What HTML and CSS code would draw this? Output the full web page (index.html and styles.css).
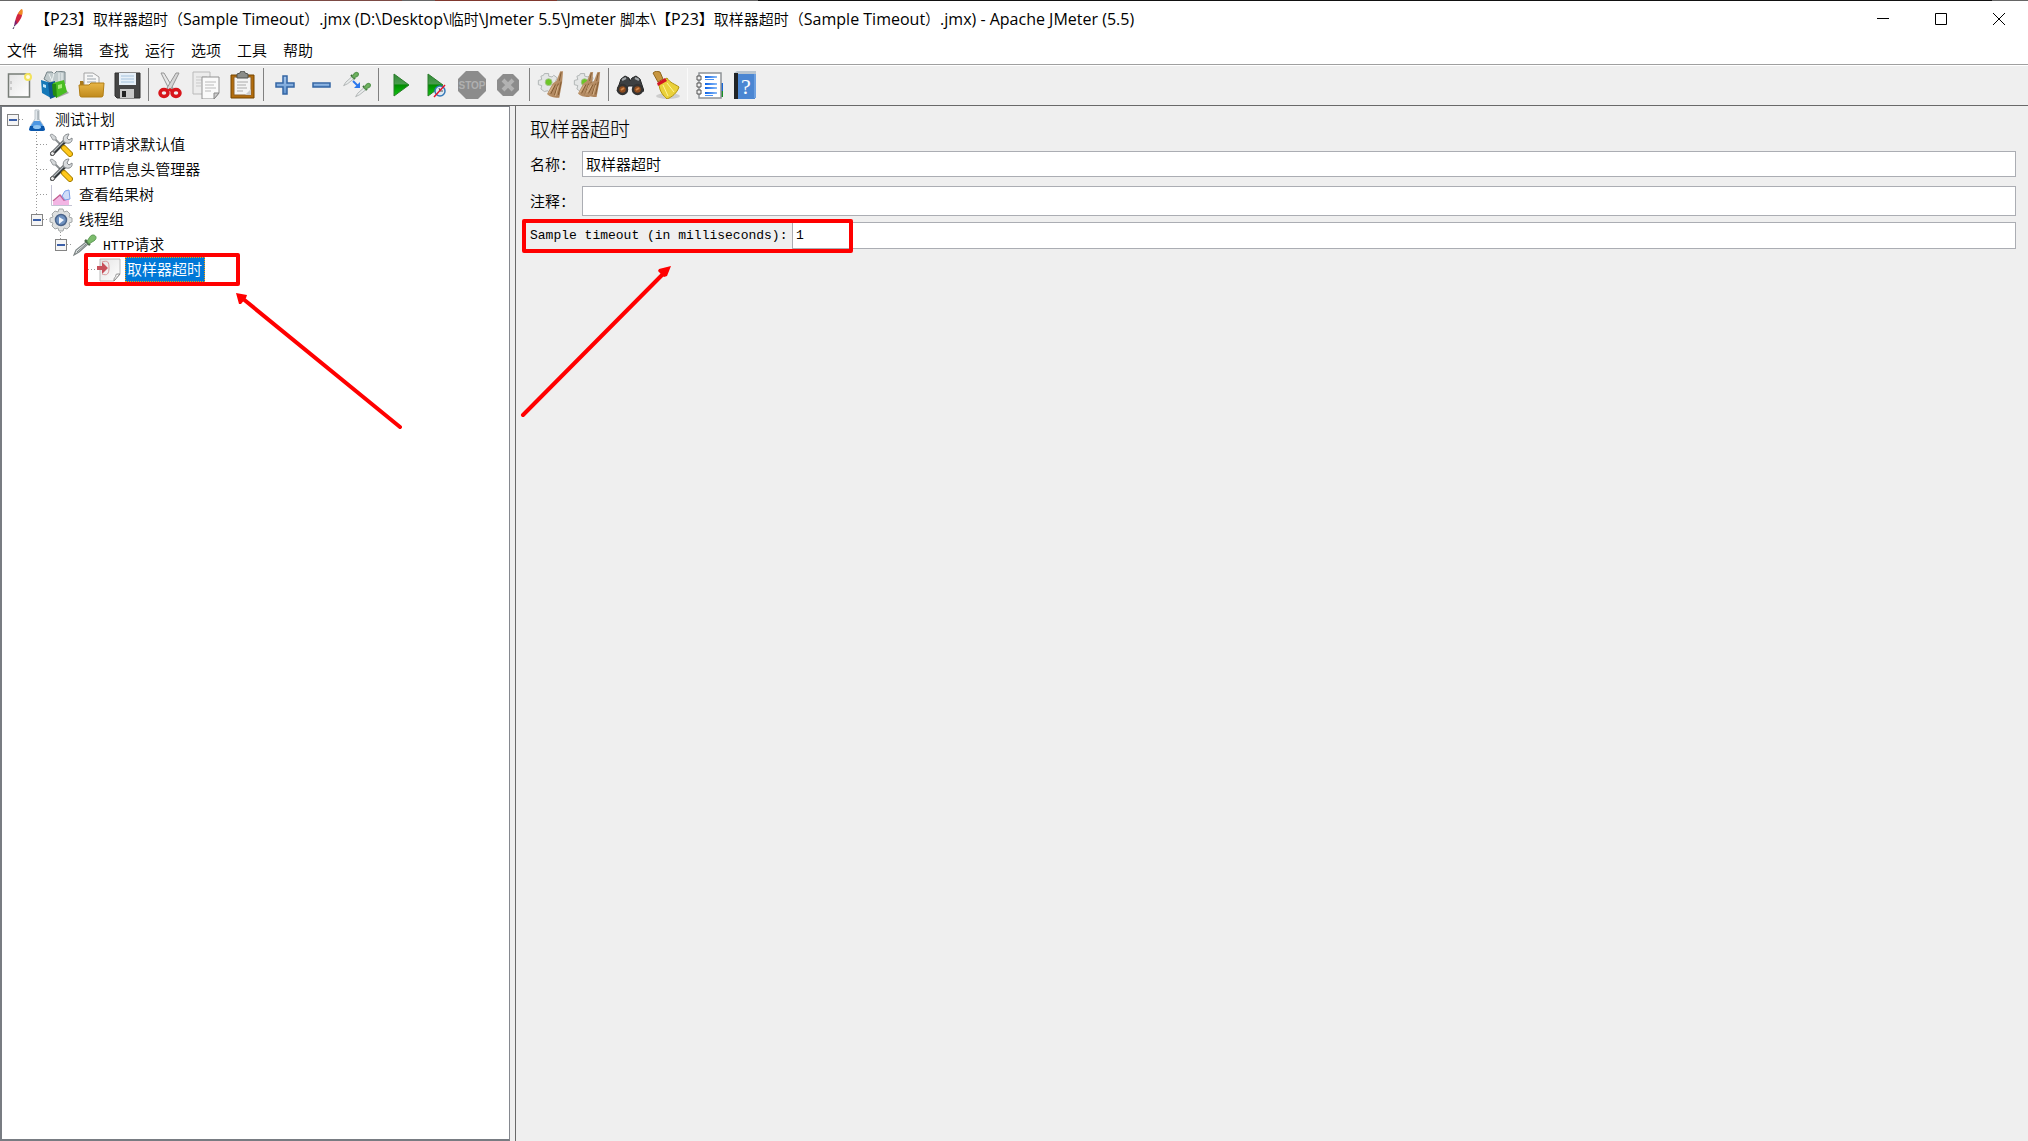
FILE: index.html
```html
<!DOCTYPE html>
<html lang="zh-CN">
<head>
<meta charset="utf-8">
<title>Apache JMeter (5.5)</title>
<link rel="stylesheet" href="styles.css">
</head>
<body>
<svg class="sprite" width="0" height="0" aria-hidden="true">
  <defs>
    <linearGradient id="blue" x1="0" y1="0" x2="0" y2="1"><stop offset="0" stop-color="#a9c8ec"/><stop offset="1" stop-color="#5f93cf"/></linearGradient>
    <linearGradient id="green" x1="0" y1="0" x2="0" y2="1"><stop offset="0" stop-color="#2f8a35"/><stop offset=".45" stop-color="#4a9c4e"/><stop offset=".5" stop-color="#008c00"/><stop offset="1" stop-color="#10c810"/></linearGradient>
    <linearGradient id="gold" x1="0" y1="0" x2="0" y2="1"><stop offset="0" stop-color="#e8b648"/><stop offset="1" stop-color="#c08a1c"/></linearGradient>
    <linearGradient id="paper" x1="0" y1="0" x2="1" y2="1"><stop offset="0" stop-color="#e4e4e4"/><stop offset="1" stop-color="#ffffff"/></linearGradient>
    <linearGradient id="straw" x1="0" y1="0" x2="1" y2="1"><stop offset="0" stop-color="#c9a47e"/><stop offset="1" stop-color="#a67a50"/></linearGradient>
    <linearGradient id="line" x1="0" x2="1"><stop offset="0" stop-color="#0a62e8"/><stop offset="1" stop-color="#8dbdf8"/></linearGradient>
    <symbol id="pipette" viewBox="0 0 24 24">
      <path d="M1 22 3 17 13 9l2 2-9 8z" fill="#e4e9e9" stroke="#7d8585" stroke-width="1.200"/>
      <path d="m4 19 9-8" stroke="#5a6262" stroke-width=".8"/>
      <path d="m12 7 5 5" stroke="#4c6c4c" stroke-width="2.500"/>
      <path d="M14 8c2-2 3-6 6-6 3 0 4 3 2 5-2 2-4 2-6 4z" fill="#7cbc6c" stroke="#5c9a54"/>
    </symbol>
    <symbol id="pipette-small" viewBox="0 0 24 24">
      <path d="M1 22 4 17 14 8l3 3-10 8z" fill="#e9ecec" stroke="#a4aaaa" stroke-width="1.200"/>
      <path d="m12 6 6 6" stroke="#3d6a38" stroke-width="3"/>
      <path d="M14 8c2-2 3-6 6-6 3 0 4 3 2 5-2 2-4 2-6 4z" fill="#6fb45e" stroke="#5c9a54" stroke-width="2"/>
    </symbol>
    <symbol id="tools" viewBox="0 0 24 24">
      <path d="m4 4 10 10" stroke="#8b8f92" stroke-width="2"/>
      <path d="M1 2 3 1l4 3 0 3-3 0z" fill="#d5d8da" stroke="#9a9ea1"/>
      <path d="m3 21 13-13" stroke="#33383b" stroke-width="4" stroke-linecap="round"/>
      <path d="m3 20 12-12" stroke="#b6bbbe" stroke-width="1.500"/>
      <path d="M15 9c-2-4 0-8 5-8l-2 4 2 2 3-2c1 4-3 7-8 4z" fill="#d8dbdd" stroke="#85898c"/>
      <circle cx="3.500" cy="20.500" r="2" fill="#e9e9e9" stroke="#555"/>
      <path d="m15 15 6 6" stroke="#a98000" stroke-width="6" stroke-linecap="round"/>
      <path d="m15 15 6 6" stroke="#ffc81c" stroke-width="4" stroke-linecap="round"/>
    </symbol>
    <symbol id="gearbit" viewBox="0 0 28 28">
      <path d="M8 3h5v3l4 1 2-2 4 3-2 4 3 1v6l-4 1-1 4-5 2-2-3-4 1-4-3 1-4-4-1v-5l4-1-1-4 3-1z" fill="#e4e6e6" stroke="#aaaeae"/>
      <circle cx="13" cy="13" r="4" fill="#6cc627" stroke="#a5bf8e"/>
    </symbol>
    <symbol id="straws" viewBox="0 0 18 28">
      <path d="m17 0-3 0-4 10-4 3-6 11c4 4 9 4 13 4l3-16z" fill="url(#straw)"/>
      <path d="m9 14-5 10m8-11-4 12m7-14-3 14m3-24-2 9" stroke="#80582f" fill="none"/>
      <path d="m7 15-5 8m10-8-3 11" stroke="#dcb98f" fill="none"/>
    </symbol>
  </defs>
</svg>

<div class="window">
  <header class="titlebar">
    <svg class="feather" width="16" height="24" viewBox="0 0 16 24" aria-hidden="true">
      <path d="M5 17C5 11 8 5 11 3c3 4 0 9-4 14z" fill="#cf2440"/><path d="M8 7c1-3 3-5 4-5 1 1 1 3 0 6z" fill="#f08a24"/><path d="M6 13c-2 2-1 3-2 6l3-2z" fill="#7b2270"/><path d="m3 22 2-4" stroke="#3b2a55" stroke-dasharray="2 1"/>
    </svg>
    <h1 class="title"><span class="han">【</span>P23<span class="han">】取样器超时（</span>Sample Timeout<span class="han">）</span>.jmx (D:\Desktop\<span class="han">临时</span>\Jmeter 5.5\Jmeter <span class="han">脚本</span>\<span class="han">【</span>P23<span class="han">】取样器超时（</span>Sample Timeout<span class="han">）</span>.jmx) - Apache JMeter (5.5)</h1>
    <div class="controls">
      <button type="button" aria-label="最小化"><svg width="12" height="12" viewBox="0 0 12 12"><path d="M0 5.500h12"/></svg></button>
      <button type="button" aria-label="最大化"><svg width="12" height="12" viewBox="0 0 12 12"><path d="M.5.5h11v11H.5z"/></svg></button>
      <button type="button" aria-label="关闭"><svg width="12" height="12" viewBox="0 0 12 12"><path d="m0 0 12 12M12 0 0 12"/></svg></button>
    </div>
  </header>

  <nav class="menubar">
    <button type="button">文件</button>
    <button type="button">编辑</button>
    <button type="button">查找</button>
    <button type="button">运行</button>
    <button type="button">选项</button>
    <button type="button">工具</button>
    <button type="button">帮助</button>
  </nav>

  <div class="toolbar" role="toolbar">
    <button type="button" aria-label="新建"><svg viewBox="0 0 28 28"><path d="M3.500 3h21v23h-21z" fill="url(#paper)" stroke="#777d77" stroke-width="1.500"/><path d="M6 10v3m0 3v3" stroke="#aaa"/><circle cx="23" cy="6" r="3" fill="#fffce0" stroke="#f3e35c" stroke-width="2"/></svg></button>
    <button type="button" aria-label="模板"><svg viewBox="0 0 28 28"><path d="m16 27 12-5-4-4z" fill="#a5a5a5"/><path d="M3 8 6 1l5 0 2 2 3-3 8 1 0 12-10 2z" fill="#bfc9cb" stroke="#778488"/><path d="m8 3 3 7m2-8-2 8m7-8v8m3-8v9" stroke="#eef3f3"/><path d="m0 9 10 3v15L1 22z" fill="#1478b8"/><path d="m7 12 7-2v16l-5 2z" fill="#0c5791"/><path d="m2 13 3 1v3l-3-1z" fill="#bfe6fa"/><path d="m12 12 11-3 3 12-11 6z" fill="#48bd22"/><path d="m11 13 4 0 1 14-4-3z" fill="#238a12"/><path d="m17 14 4-1v4l-4 1z" fill="#a7ed78"/></svg></button>
    <button type="button" aria-label="打开"><svg viewBox="0 0 28 28"><path d="M3 10h3l2 2h16v12H3z" fill="#a9791c"/><path d="M7 2h9l6 4v10H7z" fill="#f7f7f7" stroke="#a3a3a3"/><path d="M10 5h6m-6 3h9m-9 3h9" stroke="#9aa3aa"/><path d="M2 14h10l2-2h13l-1 13a2 2 0 0 1-2 1H5a2 2 0 0 1-2-1z" fill="url(#gold)" stroke="#b27f16"/></svg></button>
    <button type="button" aria-label="保存"><svg viewBox="0 0 28 28"><path d="M2 2h25v25H4l-2-2z" fill="#454545" stroke="#303030"/><path d="M6 2h17v12H6z" fill="#e7f0f8"/><path d="M8 5h13M8 8h13M8 11h13" stroke="#a5c2dc"/><path d="M7 18h14v9H7z" fill="#c9c9c9"/><path d="M9 20h4v6H9z" fill="#222"/></svg></button>
    <span class="sep"></span>
    <button type="button" aria-label="剪切"><svg viewBox="0 0 28 28"><path d="m5 2 3 0 9 15-3 3z" fill="#e7e7e7" stroke="#959595"/><path d="m23 2-3 0-9 15 3 3z" fill="#d6d6d6" stroke="#959595"/><ellipse cx="8" cy="22" rx="4" ry="3.500" fill="none" stroke="#d8151b" stroke-width="3.500"/><ellipse cx="20" cy="22" rx="4" ry="3.500" fill="none" stroke="#d8151b" stroke-width="3.500"/><path d="m11 19 3-2 3 2-2 2z" fill="#d8151b"/></svg></button>
    <button type="button" aria-label="复制"><svg viewBox="0 0 28 28"><path d="M1 1h17v22H1z" fill="#ececec" stroke="#b9b9b9"/><path d="M4 6h11M4 9h6M4 12h5M4 15h5" stroke="#c9c9c9"/><path d="M10 6h17v16l-5 6H10z" fill="#fafafa" stroke="#929292"/><path d="M13 11h11m-11 3h9m-9 3h11m-11 3h6" stroke="#bababa"/><path d="M27 22h-5v6z" fill="#ccc" stroke="#888"/></svg></button>
    <button type="button" aria-label="粘贴"><svg viewBox="0 0 28 28"><path d="M3 4h23v23H3z" fill="#b26c0c" stroke="#744500"/><path d="M6 6h17v18H6z" fill="#f4f4f4" stroke="#8e6128"/><path d="M9 5V3l3-1 1-2h3l1 2 3 1v4H9z" fill="#8b8d89" stroke="#51534f"/><path d="M9 11h11M9 14h9M9 17h10M9 20h6" stroke="#aaa"/><path d="m23 18-6 6h6z" fill="#ccc"/></svg></button>
    <span class="sep"></span>
    <button type="button" aria-label="展开"><svg viewBox="0 0 28 28"><path d="M12 5h4v7h7v4h-7v7h-4v-7H5v-4h7z" fill="url(#blue)" stroke="#3465a4" stroke-width="1.500"/></svg></button>
    <button type="button" aria-label="收起"><svg viewBox="0 0 28 28"><path d="M6 12h17v4H6z" fill="url(#blue)" stroke="#3465a4" stroke-width="1.500"/></svg></button>
    <button type="button" aria-label="切换"><svg viewBox="0 0 28 28"><use href="#pipette-small" width="16" height="16" y="0"/><use href="#pipette-small" x="12" y="11" width="16" height="16"/><path d="m10 10 5 5" stroke="#2c78ec" stroke-width="2"/><path d="m17 11 0 6-6 0z" fill="#2c78ec"/></svg></button>
    <span class="sep"></span>
    <button type="button" aria-label="启动"><svg viewBox="0 0 28 28"><path d="m8 3 15 11L8 25z" fill="url(#green)" stroke="#2c7d2c"/></svg></button>
    <button type="button" aria-label="不停顿开始"><svg viewBox="0 0 28 28"><path d="m6 3 15 11L6 25z" fill="url(#green)" stroke="#2c7d2c"/><circle cx="18" cy="20" r="5" fill="#dfe9f2" stroke="#3679b8" stroke-width="1.500"/><path d="m17 17 1 3h3" stroke="#555" fill="none"/><path d="m12 26 11-12" stroke="#e0182b" stroke-width="1.500"/></svg></button>
    <button type="button" aria-label="停止" disabled><svg viewBox="0 0 28 28"><path d="M8 0h12l8 8v12l-8 8H8l-8-8V8z" fill="#8c8c8c"/><text x="14" y="18" class="stop-text">STOP</text></svg></button>
    <button type="button" aria-label="关闭线程" disabled><svg viewBox="0 0 28 28"><path d="M9 3h10l6 6v10l-6 6H9l-6-6V9z" fill="#8c8c8c"/><path d="m9 9 10 10M19 9 9 19" stroke="#b2b2b2" stroke-width="4"/></svg></button>
    <span class="sep"></span>
    <button type="button" aria-label="清除"><svg viewBox="0 0 28 28"><use href="#gearbit" width="25" height="24"/><use href="#straws" x="10" width="17" height="27"/></svg></button>
    <button type="button" aria-label="清除全部"><svg viewBox="0 0 28 28"><use href="#gearbit" width="25" height="24"/><use href="#straws" x="5" width="16" height="27"/><use href="#straws" x="12" width="16" height="27"/></svg></button>
    <span class="sep"></span>
    <button type="button" aria-label="搜索"><svg viewBox="0 0 28 28"><path d="m5 8 4-3 4 2 1 3 2-3 4-2 4 3 4 12-9 2-2-7h-5l-2 7-9-2z" fill="#3d4042" stroke="#252728"/><path d="m6 9 4-2m9 0 4 2" stroke="#a0a5a8" stroke-width="2"/><circle cx="6.500" cy="18.500" r="4.500" fill="#8c4b1e" stroke="#333" stroke-width="2.500"/><circle cx="21.500" cy="18.500" r="4.500" fill="#8c4b1e" stroke="#333" stroke-width="2.500"/><path d="m5 19 3-2m12 2 3-2" stroke="#d0854a" stroke-width="2"/></svg></button>
    <button type="button" aria-label="重置搜索"><svg viewBox="0 0 28 28"><ellipse cx="16" cy="25" rx="12" ry="3" fill="#cdcdcd"/><path d="m1 2 3-2 4 1 3 7-5 3z" fill="#c79640" stroke="#8f651d"/><path d="m7 12 8-5c3 5 8 6 12 9-2 6-7 10-12 12-3-3-8-7-8-16z" fill="#ead13b" stroke="#b3930d"/><path d="m11 14 5 11m-1-13 7 9" stroke="#fff397"/><path d="m5 12 8-5 2 3-9 5z" fill="#d31622"/></svg></button>
    <span class="sep faint"></span>
    <button type="button" aria-label="函数助手"><svg viewBox="0 0 28 28"><path d="M25 12h3v8h-3z" fill="#1767d8"/><path d="M25 20h3v6h-3z" fill="#168f22"/><path d="M4 2h22v25H4z" fill="#fff" stroke="#8e9396" stroke-width="1.500"/><path d="M2 5h4v4H2zm0 7h4v4H2zm0 7h4v4H2z" fill="#eee" stroke="#555"/><path d="M10 5h12v2H10zm0 7h12v2H10zm0 4h12v2H10zm0 5h12v2H10z" fill="url(#line)"/><path d="M10 8h9v1h-9zm0 16h8v1h-8z" fill="#4a90f0"/></svg></button>
    <button type="button" aria-label="帮助"><svg viewBox="0 0 28 28"><path d="m3 2 3-2h19v3H3z" fill="#b9c5d0"/><path d="M3 3h21v25H3z" fill="#4b86d2"/><path d="M3 2h4v26H3z" fill="#202326"/><path d="M23 3h2v24h-2z" fill="#6da0e0"/><text x="15" y="23" class="help-text">?</text></svg></button>
  </div>

  <main class="workspace">
    <aside class="tree-pane">
      <ul class="tree" role="tree">
        <li role="treeitem">
          <div class="row"><button type="button" class="expander" aria-label="折叠"></button><span class="stub"></span>
            <svg class="node" viewBox="0 0 24 24"><path d="M10 2h4v9l4 6v4H6v-4l4-6z" fill="#e2e8ec" stroke="#bcc4ca"/><path d="M13 3v9" stroke="#8d979e"/><path d="m9 13 6 0 4 6 1 3-2 1H6l-2-1 1-3z" fill="#4d97e2"/><path d="M5 18h14l1 4-2 1H6l-2-1z" fill="#0b57ab"/><ellipse cx="12" cy="19" rx="4" ry="2" fill="#8fc5f2"/></svg>
            <span class="label">测试计划</span></div>
          <ul class="branch root-branch" role="group">
            <li role="treeitem"><div class="row leaf"><span class="stub"></span><svg class="node"><use href="#tools"/></svg><span class="label"><span class="mono">HTTP</span>请求默认值</span></div></li>
            <li role="treeitem"><div class="row leaf"><span class="stub"></span><svg class="node"><use href="#tools"/></svg><span class="label"><span class="mono">HTTP</span>信息头管理器</span></div></li>
            <li role="treeitem"><div class="row leaf"><span class="stub"></span>
              <svg class="node" viewBox="0 0 24 24"><path d="M2.500 2v20.500H23" stroke="#c3c3d4" fill="none"/><path d="m4 22 0-3 7-6 4 4 5-1v6z" fill="#f3b5e4"/><path d="m4 18 7-6 4 5 5-2" stroke="#c45e93" fill="none" stroke-width="1.500"/><path d="m13 13 3-5 4-1 1 9-5 1z" fill="#cfdcf8" stroke="#7c9fe8"/></svg>
              <span class="label">查看结果树</span></div></li>
            <li role="treeitem">
              <div class="row"><button type="button" class="expander" aria-label="折叠"></button><span class="stub"></span>
                <svg class="node" viewBox="0 0 24 24"><path d="m10 1 4 0 1 3 3-1 3 3-1 3 3 1v4l-3 1 1 3-3 3-3-1-1 3h-4l-1-3-3 1-3-3 1-3-3-1v-4l3-1-1-3 3-3 3 1z" fill="#dfe1e1" stroke="#a4a8a8"/><circle cx="12" cy="12" r="5.500" fill="#6f92c0" stroke="#4a648a" stroke-width="1.500"/><path d="m10 9 5 3-5 4z" fill="#f2f7fd"/></svg>
                <span class="label">线程组</span></div>
              <ul class="branch" role="group">
                <li role="treeitem">
                  <div class="row"><button type="button" class="expander" aria-label="折叠"></button><span class="stub"></span><svg class="node"><use href="#pipette"/></svg><span class="label"><span class="mono">HTTP</span>请求</span></div>
                  <ul class="branch" role="group">
                    <li role="treeitem" aria-selected="true"><div class="row leaf"><span class="stub"></span>
                      <svg class="node" viewBox="0 0 24 24"><path d="M3 1h20v15l-6 7H3z" fill="url(#paper)" stroke="#bbb"/><path d="M23 16c-3 0-5 0-4 2-1 2-2 1-2 5z" fill="#fff" stroke="#888"/><path d="M0 8h5V4l6 6-6 6v-4H0z" fill="#c8505a"/><path d="M5 4c6-2 7 0 7 6s-2 8-7 6" fill="none" stroke="#d99a9d"/></svg>
                      <span class="label selected">取样器超时</span></div></li>
                  </ul>
                </li>
              </ul>
            </li>
          </ul>
        </li>
      </ul>
    </aside>

    <form class="editor">
      <h2>取样器超时</h2>
      <div class="field name"><label for="name">名称：</label><input id="name" type="text" value="取样器超时"></div>
      <div class="field comment"><label for="comment">注释：</label><input id="comment" type="text"></div>
      <div class="field timeout"><label class="mono" for="timeout">Sample timeout (in milliseconds):</label><input class="mono" id="timeout" type="text" value="1"></div>
    </form>
  </main>

  <svg class="annotations" width="900" height="450" viewBox="0 0 900 450" aria-hidden="true">
    <g fill="none" stroke="#f00" stroke-width="4" stroke-linejoin="round" stroke-linecap="round">
      <path d="M86 255h152v29H86zM524 221h327v30H524z"/>
      <path d="M400 427 242 298M523 415 665 272"/>
    </g>
    <path d="m236 293 11 2-1 3-5 6-2 0zM671 266l-4 10-3 1-6-6 1-2z" fill="#f00"/>
  </svg>
</div>
</body>
</html>
```

FILE: styles.css
```css
* { box-sizing: border-box; }

body {
  margin: 0;
  background: #efefef;
  color: #000;
  font: 350 15px/20px "Noto Sans CJK SC", sans-serif;
}

button {
  margin: 0;
  padding: 0;
  border: 0;
  background: none;
  color: inherit;
  font: inherit;
}

ul { margin: 0; padding: 0; list-style: none; }

.sprite { position: absolute; }

.window {
  position: relative;
  display: flex;
  flex-direction: column;
  min-height: 100vh;
}

/* Title bar */
.titlebar {
  display: flex;
  align-items: center;
  height: 38px;
  padding-left: 10px;
  background: linear-gradient(90deg, #666 280px, #7c4a44 280px 402px, #666 402px 435px, #80382e 435px 557px, #666 557px 758px, #111 758px calc(100% - 36px), #666 calc(100% - 36px)) 0 0 / 100% 1px no-repeat #fff;
}

.feather { flex: none; }

.title {
  flex: 1;
  margin: 0 0 0 9px;
  font: 16px/20px "Open Sans", sans-serif;
  white-space: nowrap;
  text-spacing-trim: space-all;
}

.han { font: 350 15px/20px "Noto Sans CJK SC", sans-serif; }

.controls { display: flex; align-self: stretch; }

.controls button {
  display: grid;
  place-items: center;
  width: 58px;
}

.controls path { fill: none; stroke: #000; }

/* Menu bar */
.menubar {
  display: flex;
  gap: 16px;
  height: 27px;
  padding: 2px 7px 4px;
  border-bottom: 1px solid #a0a0a0;
  background: #fff;
}

/* Toolbar */
.toolbar {
  display: flex;
  align-items: center;
  height: 41px;
  padding: 0 0 2px 1px;
  border-top: 1px solid #fff;
  border-bottom: 1px solid #696969;
}

.toolbar button {
  display: grid;
  place-items: center;
  width: 36px;
  height: 36px;
}

.toolbar svg { width: 28px; height: 28px; }

.sep { width: 7px; height: 33px; background: linear-gradient(#808080, #808080) 3px 0 / 1px 100% no-repeat; }
.sep.faint { background-image: linear-gradient(#fafafa, #fafafa); }

.stop-text { fill: #b0b0b0; font: bold 10px "Liberation Sans", sans-serif; text-anchor: middle; }
.help-text { fill: #fff; font: 22px "Liberation Serif", serif; text-anchor: middle; }

/* Workspace */
.workspace {
  display: grid;
  flex: 1;
  grid-template-columns: 510px 1fr;
  gap: 5px;
}

.tree-pane {
  border: 2px solid #787c82;
  border-top-width: 1px;
  border-right: 1px solid #85888f;
  background: #fff;
}

.row {
  display: flex;
  align-items: center;
  height: 25px;
  padding-left: 5px;
}

.row.leaf { padding-left: 11px; }
.row.leaf .stub { width: 11px; }

.expander {
  flex: none;
  width: 12px;
  height: 12px;
  border: 1px solid #848484;
  background: linear-gradient(#3b5fa8, #3b5fa8) 1px 4px / 8px 2px no-repeat #f5f5f5;
}

.stub {
  flex: none;
  width: 5px;
  height: 1px;
  margin-right: 1px;
  background: repeating-linear-gradient(90deg, #999 0 1px, #fff 1px 3px);
}

.node { flex: none; width: 24px; height: 24px; }

.label {
  height: 25px;
  margin-left: 4px;
  padding: 0 3px 0 2px;
  line-height: 24px;
  white-space: nowrap;
}

.label.selected {
  outline: 1px dotted #f90;
  outline-offset: -1px;
  background: #0078d7;
  color: #fff;
}

.branch {
  padding-left: 24px;
  background: repeating-linear-gradient(#999 0 1px, #fff 1px 3px) 34px 0 / 1px 13px no-repeat;
}

.root-branch { background-size: 1px calc(100% - 62px); }

.mono { font-family: "Liberation Mono", monospace; font-size: 13px; font-weight: 400; }

/* Editor */
.editor {
  padding: 9px 12px 0 14px;
  border-left: 1px solid #696969;
}

.editor h2 { height: 36px; margin: 0; font-size: 20px; font-weight: 300; line-height: 28px; }

.field { display: flex; align-items: center; }

.field label { flex: none; width: 52px; white-space: nowrap; }

.field input {
  flex: 1;
  min-width: 0;
  height: 100%;
  padding: 0 3px 2px;
  border: 1px solid #abadb3;
  border-radius: 0;
  background: #fff;
  color: #000;
  font: inherit;
}

.field.name { height: 26px; margin-bottom: 9px; }
.field.comment { height: 30px; margin-bottom: 6px; }
.field.timeout { height: 27px; }
.field.timeout label { width: 262px; }
.field input.mono { padding-bottom: 0; font-family: "Liberation Mono", monospace; font-size: 13px; }

/* Callouts drawn over the window */
.annotations { position: absolute; top: 0; left: 0; pointer-events: none; }
```
